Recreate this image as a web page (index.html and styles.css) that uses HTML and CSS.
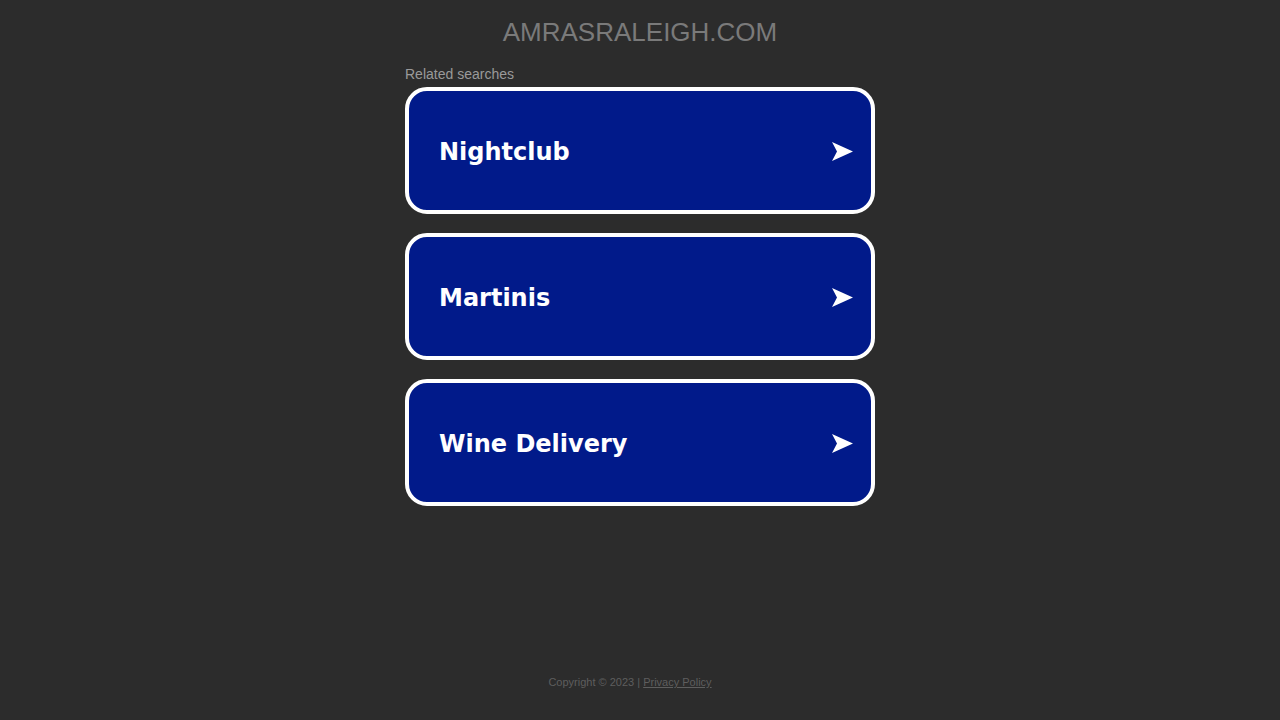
FILE: index.html
```html
<!DOCTYPE html>
<html>
<head>
<meta charset="utf-8">
<title>amrasraleigh.com</title>
<link rel="stylesheet" href="styles.css">
</head>
<body>
<div class="page">
  <header class="domain">AMRASRALEIGH.COM</header>
  <main class="content">
    <div class="label">Related searches</div>
    <a class="card" href="#"><span class="card-text">Nightclub</span><svg class="arrow" width="22" height="20" viewBox="0 0 22 20"><polygon points="0,0 21,9.5 0,19 5,9.5" fill="#fff"/></svg></a>
    <a class="card" href="#"><span class="card-text">Martinis</span><svg class="arrow" width="22" height="20" viewBox="0 0 22 20"><polygon points="0,0 21,9.5 0,19 5,9.5" fill="#fff"/></svg></a>
    <a class="card" href="#"><span class="card-text">Wine Delivery</span><svg class="arrow" width="22" height="20" viewBox="0 0 22 20"><polygon points="0,0 21,9.5 0,19 5,9.5" fill="#fff"/></svg></a>
  </main>
  <footer class="footer">Copyright © 2023 | <a href="#" class="privacy">Privacy Policy</a></footer>
</div>
</body>
</html>
```
FILE: styles.css
```css
html, body {
  margin: 0;
  padding: 0;
  background: #2c2c2c;
  height: 100%;
}
.page {
  height: 720px;
  display: flex;
  flex-direction: column;
  align-items: center;
  font-family: Arial, "Liberation Sans", sans-serif;
}
.domain {
  margin-top: 16px;
  font-size: 26px;
  line-height: 32px;
  color: #7a7a7a;
}
.content {
  width: 470px;
  margin-top: 18px;
  display: flex;
  flex-direction: column;
}
.label {
  font-size: 14px;
  line-height: 16px;
  color: #9a9a9a;
  margin-bottom: 5px;
}
.card {
  box-sizing: border-box;
  height: 127px;
  margin-bottom: 19px;
  background: #011a8a;
  border: 4px solid #fff;
  border-radius: 22px;
  display: flex;
  align-items: center;
  justify-content: space-between;
  padding: 3px 17px 0 30px;
  text-decoration: none;
}
.card-text {
  font-family: "DejaVu Sans", Verdana, sans-serif;
  font-weight: bold;
  font-size: 24px;
  color: #fff;
}
.arrow {
  display: block;
}
.footer {
  margin-top: auto;
  margin-bottom: 32px;
  margin-right: 20px;
  font-size: 11px;
  color: #5e5e5e;
}
.privacy {
  color: #5e5e5e;
  text-decoration: underline;
}
```
